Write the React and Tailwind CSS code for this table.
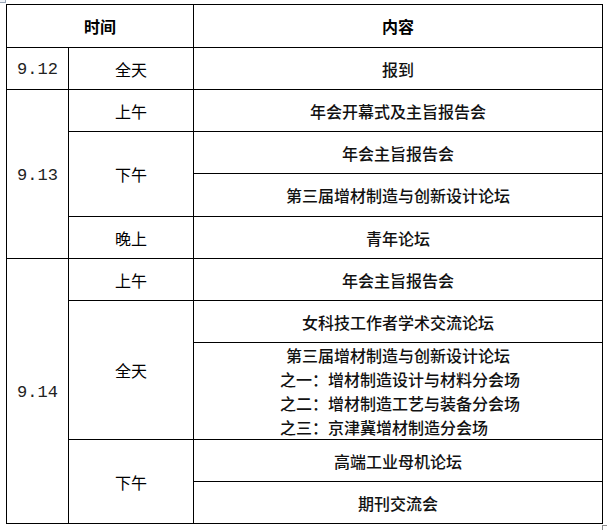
import React from 'react';

const cjk = "font-['Noto_Sans_CJK_SC',sans-serif]";
const cell = 'flex items-center justify-center border-r border-b border-black';

const Time = ({ children, className = '' }) => (
    <div className={`${cell} ${className} text-[16px] text-black`}>{children}</div>
);

const Item = ({ children, className = '' }) => (
    <div className={`${cell} ${className} text-[16px] font-medium text-[#111]`}>{children}</div>
);

const Day = ({ children, className = '' }) => (
    <div className={`${cell} ${className} pt-[3px] font-['Liberation_Mono',monospace] text-[17px] text-[#222]`}>{children}</div>
);

export default function App() {
    return (
        <main className={`relative w-[607px] h-[530px] bg-white ${cjk}`}>
            {/* word table handles */}
            <div className="absolute left-0 top-0 w-[6px] h-[3px] border-r border-b border-[#9aa7b8] bg-[#eef2f8]" />
            <div className="absolute left-[602px] top-[525px] w-[8px] h-[8px] border-l border-t border-[#8c8c8c]" />

            <div className="absolute left-[6px] top-[4px] grid grid-cols-[62px_125px_409px] grid-rows-[43px_42px_42px_42px_43px_42px_42px_42px_97px_42px_42px] border-l border-t border-black">
                <div className={`${cell} col-span-2 text-[16px] font-bold`}>时间</div>
                <div className={`${cell} text-[16px] font-bold`}>内容</div>

                <Day>9.12</Day>
                <Time>全天</Time>
                <Item>报到</Item>

                <Day className="row-span-4">9.13</Day>
                <Time>上午</Time>
                <Item>年会开幕式及主旨报告会</Item>
                <Time className="row-span-2">下午</Time>
                <Item>年会主旨报告会</Item>
                <Item>第三届增材制造与创新设计论坛</Item>
                <Time>晚上</Time>
                <Item>青年论坛</Item>

                <Day className="row-span-5">9.14</Day>
                <Time>上午</Time>
                <Item>年会主旨报告会</Item>
                <Time className="row-span-2">全天</Time>
                <Item>女科技工作者学术交流论坛</Item>
                <div className="flex flex-col justify-center border-r border-b border-black text-[16px] font-medium leading-[24px] text-[#111]">
                    <div className="text-center">第三届增材制造与创新设计论坛</div>
                    <div className="pl-[86px]">之一：增材制造设计与材料分会场</div>
                    <div className="pl-[86px]">之二：增材制造工艺与装备分会场</div>
                    <div className="pl-[86px]">之三：京津冀增材制造分会场</div>
                </div>
                <Time className="row-span-2">下午</Time>
                <Item>高端工业母机论坛</Item>
                <Item>期刊交流会</Item>
            </div>
        </main>
    );
}
